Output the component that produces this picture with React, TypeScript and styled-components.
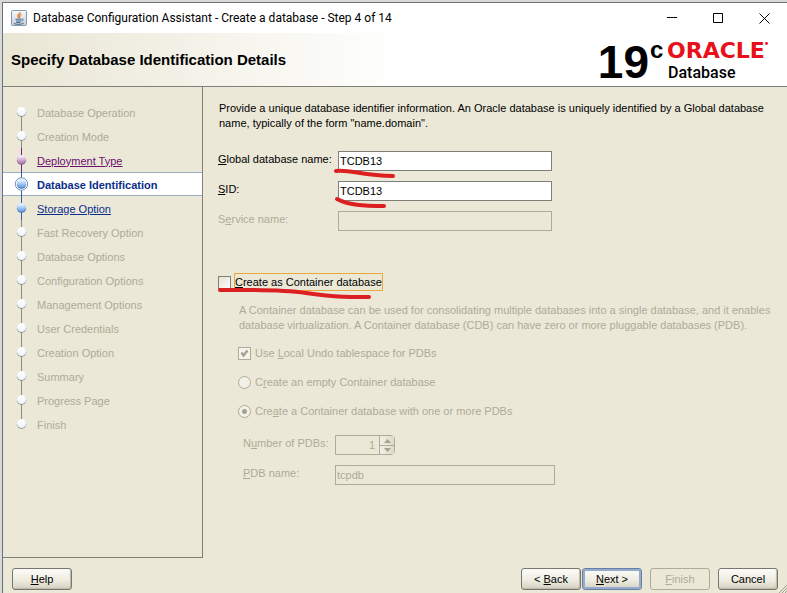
import React from "react";
import styled, { createGlobalStyle, css } from "styled-components";

const c = {
  panel: "#ebe8d7",
  line: "#80807a",
  muted: "#aeab98",
  mutedLine: "#aeab98",
  navy: "#0a2f8a",
  purple: "#6b0f6e",
  mark: "#dc1f20",
};

const Global = createGlobalStyle`
  *, *::before, *::after { box-sizing: border-box; }
  html, body, #root { height: 100%; }
  body {
    margin: 0;
    overflow: hidden;
    background: #d8d9db;
    color: #000;
    font: 11px/15px "Liberation Sans", Arial, sans-serif;
  }
  u { text-underline-offset: 1px; }
`;

const Desktop = styled.div`
  display: flex;
  height: 100%;
  padding: 2px 0 0 2px;
`;

const Window = styled.main`
  display: flex;
  flex: 1;
  flex-direction: column;
  border: solid #6f7072;
  border-width: 1px 0 0 1px;
  background: ${c.panel};
`;

const TitleBar = styled.header`
  display: flex;
  flex: none;
  align-items: center;
  height: 30px;
  padding-left: 8px;
  background: #fff;
`;

const TitleText = styled.span`
  flex: 1;
  margin-left: 6px;
  font: 12px/16px Roboto, "Open Sans", sans-serif;
  white-space: nowrap;
`;

const WindowButton = styled.button`
  display: grid;
  place-items: center;
  width: 46px;
  height: 28px;
  padding: 0;
  border: 0;
  background: none;
`;

const Banner = styled.section`
  display: flex;
  flex: none;
  align-items: center;
  justify-content: space-between;
  height: 54px;
  padding: 0 8px 0 8px;
  border-bottom: 1px solid ${c.line};
  background: linear-gradient(90deg, #e9e6d4 0, #fff 400px);
`;

const Heading = styled.h1`
  margin: 0;
  font-size: 15px;
  line-height: 20px;
`;

const Logo = styled.div`
  display: flex;
  align-items: flex-start;
  height: 44px;
`;

const Version = styled.span`
  font: bold 46px/48px "Liberation Sans", Arial, sans-serif;
`;

const Release = styled.span`
  width: 16px;
  padding-left: 1px;
  font: bold 24px/24px "Liberation Sans", sans-serif;
`;

const LogoNames = styled.div`
  display: flex;
  flex-direction: column;
  width: 112px;
  margin-left: 2px;
`;

const Brand = styled.span`
  display: flex;
  align-items: flex-start;
  color: #e8101a;
  font: bold 22px/25px "DejaVu Sans", sans-serif;
`;

const Registered = styled.svg`
  flex: none;
  margin-top: 4px;
`;

const Product = styled.span`
  padding-left: 1px;
  font: 500 16px/20px Roboto, "Liberation Sans", sans-serif;
`;

const Body = styled.div`
  display: flex;
  flex: 1;
  min-height: 0;
`;

const Steps = styled.nav`
  flex: none;
  width: 200px;
  padding-top: 13px;
  border: solid ${c.line};
  border-width: 0 1px 1px 0;
`;

const StepList = styled.ol`
  margin: 0;
  padding: 0;
  list-style: none;
`;

type StepState = "idle" | "visited" | "current" | "next";

const stepText = {
  idle: css`color: ${c.muted};`,
  visited: css`color: ${c.purple};`,
  current: css`color: ${c.navy}; font-weight: bold;`,
  next: css`color: ${c.navy};`,
};

const Step = styled.li<{ $state: StepState }>`
  display: flex;
  align-items: center;
  height: 24px;
  ${(p) => stepText[p.$state]}
  ${(p) =>
    p.$state === "current" &&
    css`
      background: linear-gradient(#9aabc6 1px, #fff 1px, #fff 23px, #9aabc6 23px);
    `}
`;

const StepIcon = styled.svg`
  flex: none;
  width: 34px;
  height: 24px;
`;

const StepLabel = styled.span`
  padding-top: 2px;
`;

const StepLink = styled.a`
  padding-top: 2px;
  color: inherit;
  text-underline-offset: 1px;
`;

const Content = styled.form`
  flex: 1;
  min-width: 0;
  padding: 14px 10px 0 15px;
`;

const Intro = styled.p`
  margin: 0 0 20px;
  padding-left: 1px;
`;

const Row = styled.div<{ $label: number; $muted?: boolean }>`
  position: relative;
  display: grid;
  grid-template-columns: ${(p) => p.$label}px minmax(0, 1fr);
  height: 20px;
  margin-bottom: 10px;
  color: ${(p) => (p.$muted ? c.muted : "#000")};
`;

const FieldLabel = styled.label`
  line-height: 17px;
`;

const TextField = styled.input<{ $width: number }>`
  width: 100%;
  max-width: ${(p) => p.$width}px;
  height: 20px;
  padding: 0 1px;
  border: 1px solid ${c.line};
  border-radius: 0;
  background: #fff;
  color: #000;
  font: inherit;
  &:disabled {
    border-color: ${c.mutedLine};
    background: transparent;
    color: ${c.muted};
  }
`;

const Mark = styled.svg`
  position: absolute;
  z-index: 1;
  overflow: visible;
  fill: none;
  stroke: ${c.mark};
  stroke-width: 4;
  stroke-linecap: round;
  stroke-linejoin: round;
  pointer-events: none;
`;

const FieldMark = styled(Mark)`
  top: 16px;
  left: 115px;
  width: 64px;
  height: 14px;
`;

const OptionMark = styled(Mark)`
  top: 14px;
  left: 0;
  width: 156px;
  height: 12px;
`;

const Container = styled.div`
  position: relative;
  display: flex;
  align-items: center;
  height: 18px;
  margin-top: 42px;
`;

const FocusLabel = styled.label`
  height: 18px;
  margin-left: 3px;
  border: 1px solid #e8a93a;
  line-height: 17px;
`;

const tick =
  "url(\"data:image/svg+xml,%3Csvg xmlns='http://www.w3.org/2000/svg' width='11' height='11'%3E%3Cpath d='M2.5 4.5 4.500 7.500 8.500 2.500' fill='none' stroke='%23a3a193' stroke-width='2.400'/%3E%3C/svg%3E\")";

const Tick = styled.input`
  appearance: none;
  flex: none;
  width: 13px;
  height: 13px;
  margin: 0;
  border: 1px solid ${c.line};
  background: linear-gradient(135deg, #e6e3d4, #fbfaf6);
  &:disabled { border-color: ${c.mutedLine}; }
  &:checked { background: ${tick} center no-repeat, #f5f3ea; }
`;

const Radio = styled.input`
  appearance: none;
  flex: none;
  width: 13px;
  height: 13px;
  margin: 0;
  border: 1px solid ${c.mutedLine};
  border-radius: 50%;
  background: #f3f1e7;
  &:checked { background: radial-gradient(circle, #a3a193 2px, #f3f1e7 3px); }
`;

const Nested = styled.div`
  padding: 12px 0 0 20px;
  color: ${c.muted};
`;

const Description = styled.p`
  margin: 0 0 12px;
  padding-left: 1px;
`;

const Option = styled.div`
  display: flex;
  align-items: center;
  gap: 4px;
  height: 17px;
  margin-bottom: 12px;
`;

const PdbFields = styled.div`
  padding: 3px 0 0 5px;
`;

const Spinner = styled.div`
  display: flex;
  width: 60px;
  height: 20px;
  border: 1px solid ${c.mutedLine};
  border-radius: 0 4px 4px 0;
`;

const SpinnerInput = styled.input`
  width: 44px;
  padding: 1px 4px 0 0;
  border: 0;
  border-right: 1px solid ${c.mutedLine};
  background: transparent;
  color: ${c.muted};
  font: inherit;
  text-align: right;
`;

const SpinnerButtons = styled.div`
  display: grid;
  flex: 1;
  grid-template-rows: 1fr 1fr;
`;

const SpinnerButton = styled.button`
  display: grid;
  place-items: center;
  padding: 0;
  border: 0;
  background: linear-gradient(90deg, #f2f0e6, #dedaca);
  & + & { border-top: 1px solid ${c.mutedLine}; }
`;

const Footer = styled.footer`
  position: relative;
  display: flex;
  flex: none;
  height: 35px;
  padding: 10px 9px 0;
`;

const Actions = styled.div`
  display: flex;
  margin-left: auto;
`;

const Button = styled.button<{ $primary?: boolean; $gap?: number }>`
  width: 60px;
  height: 22px;
  margin-left: ${(p) => p.$gap ?? 0}px;
  padding: 1px 0 0;
  border: 1px solid #77776f;
  border-radius: 3px;
  background: linear-gradient(#fcfbf8, #efede1 55%, #d5d1c0);
  box-shadow: inset -1px -1px 1px #bdbaa9;
  color: #000;
  font: inherit;
  ${(p) =>
    p.$primary &&
    css`
      border-color: #6a7f9f;
      box-shadow: inset 0 0 0 2px #93abcf;
    `}
  &:disabled {
    border-color: ${c.mutedLine};
    background: transparent;
    box-shadow: none;
    color: ${c.muted};
  }
`;

const Grip = styled.svg`
  position: absolute;
  right: 0;
  bottom: 0;
`;

const steps: [string, StepState][] = [
  ["Database Operation", "idle"],
  ["Creation Mode", "idle"],
  ["Deployment Type", "visited"],
  ["Database Identification", "current"],
  ["Storage Option", "next"],
  ["Fast Recovery Option", "idle"],
  ["Database Options", "idle"],
  ["Configuration Options", "idle"],
  ["Management Options", "idle"],
  ["User Credentials", "idle"],
  ["Creation Option", "idle"],
  ["Summary", "idle"],
  ["Progress Page", "idle"],
  ["Finish", "idle"],
];

const lineColor = { idle: "#8b8b86", visited: "#7a1a80", current: "#3d5fa8", next: "#3d5fa8" };
const edgeColor = { idle: "#858a96", visited: "#82608c", current: "#3f66a5", next: "#3f66a5" };

function StepNode({ state, first, last }: { state: StepState; first: boolean; last: boolean }) {
  return (
    <StepIcon viewBox="0 0 34 24" aria-hidden="true">
      <path d={`M18.500 ${first ? 12 : 0}V${last ? 12 : 24}`} stroke={lineColor[state]} />
      {state === "current" && <circle cx="18.500" cy="12" r="6.200" fill="#fff" stroke="#6f93c4" />}
      <circle cx="18.500" cy="12.200" r="4.600" fill={edgeColor[state]} />
      <circle cx="18.500" cy="11.500" r="4.500" fill={`url(#node-${state})`} />
    </StepIcon>
  );
}

function NodeGradients() {
  const stops: [StepState, string, string][] = [
    ["idle", "#ffffff", "#eef1f8"],
    ["visited", "#f6e8f5", "#a56cab"],
    ["current", "#e3f1ff", "#5b97e6"],
    ["next", "#e3f1ff", "#5b97e6"],
  ];
  return (
    <svg width="0" height="0" display="block" aria-hidden="true">
      <defs>
        {stops.map(([id, a, b]) => (
          <linearGradient key={id} id={`node-${id}`} x1="0" y1="0" x2="0" y2="1">
            <stop offset="0.15" stopColor={a} />
            <stop offset="1" stopColor={b} />
          </linearGradient>
        ))}
      </defs>
    </svg>
  );
}

function JavaIcon() {
  return (
    <svg width="16" height="16" viewBox="0 0 16 16" fill="none" aria-hidden="true">
      <defs>
        <linearGradient id="java-tile" x1="0" y1="0" x2="0" y2="1">
          <stop offset="0" stopColor="#f8fafc" />
          <stop offset="1" stopColor="#c3ced9" />
        </linearGradient>
      </defs>
      <rect x="0.500" y="0.500" width="15" height="15" rx="1" fill="url(#java-tile)" stroke="#8799aa" />
      <path d="M9 2c.8 1.500-3 2.600-2.200 4.300.3.700.9 1.100.7 1.700M10.500 4.300C8.500 5.200 8 6 8.700 6.900c.4.600.1 1-.4 1.500" stroke="#e07a2c" strokeWidth="1.200" />
      <path d="M4.500 9.200h6M5 11h5M5.300 12.500h4.200M10.700 9.300c2-.6 2 1.200-.1 1.700M3 13.500c2.500 1.200 7.500 1.100 9.700-.3" stroke="#44688d" />
    </svg>
  );
}

export default function App() {
  return (
    <>
      <Global />
      <Desktop>
        <Window>
          <TitleBar>
            <JavaIcon />
            <TitleText>Database Configuration Assistant - Create a database - Step 4 of 14</TitleText>
            <WindowButton type="button" aria-label="Minimize">
              <svg width="11" height="11" stroke="#000"><path d="M0 4.500h10" /></svg>
            </WindowButton>
            <WindowButton type="button" aria-label="Maximize">
              <svg width="11" height="11" fill="none" stroke="#000"><path d="M.5.5h9v9h-9z" /></svg>
            </WindowButton>
            <WindowButton type="button" aria-label="Close">
              <svg width="11" height="11" stroke="#000"><path d="M.5.5l10 10M10.500.5l-10 10" /></svg>
            </WindowButton>
          </TitleBar>
          <Banner>
            <Heading>Specify Database Identification Details</Heading>
            <Logo>
              <Version>19</Version>
              <Release>c</Release>
              <LogoNames>
                <Brand>
                  ORACLE
                  <Registered width="3" height="3" aria-hidden="true">
                    <circle cx="1.500" cy="1.500" r="1.400" fill="#e8101a" />
                  </Registered>
                </Brand>
                <Product>Database</Product>
              </LogoNames>
            </Logo>
          </Banner>
          <Body>
            <Steps aria-label="Steps">
              <NodeGradients />
              <StepList>
                {steps.map(([label, state], i) => (
                  <Step key={label} $state={state}>
                    <StepNode state={state} first={i === 0} last={i === steps.length - 1} />
                    {state === "visited" || state === "next" ? (
                      <StepLink href="#">{label}</StepLink>
                    ) : (
                      <StepLabel>{label}</StepLabel>
                    )}
                  </Step>
                ))}
              </StepList>
            </Steps>
            <Content>
              <Intro>
                Provide a unique database identifier information. An Oracle database is uniquely identified by a Global database name, typically of the form "name.domain".
              </Intro>
              <Row $label={120}>
                <FieldLabel htmlFor="gdn"><u>G</u>lobal database name:</FieldLabel>
                <TextField id="gdn" $width={214} defaultValue="TCDB13" />
                <FieldMark viewBox="0 0 64 14"><path d="M3 4C16 2 30 9 60 9" /></FieldMark>
              </Row>
              <Row $label={120}>
                <FieldLabel htmlFor="sid"><u>S</u>ID:</FieldLabel>
                <TextField id="sid" $width={214} defaultValue="TCDB13" />
                <FieldMark viewBox="0 0 64 14"><path d="M4 2C15 8 30 9 51 9" /></FieldMark>
              </Row>
              <Row $label={120} $muted>
                <FieldLabel htmlFor="service">S<u>e</u>rvice name:</FieldLabel>
                <TextField id="service" $width={214} disabled />
              </Row>
              <Container>
                <Tick id="cdb" type="checkbox" />
                <FocusLabel htmlFor="cdb"><u>C</u>reate as Container database</FocusLabel>
                <OptionMark viewBox="0 0 156 12"><path d="M2 3C32 3 60 2 88 6S125 10 151 10" /></OptionMark>
              </Container>
              <Nested>
                <Description>
                  A Container database can be used for consolidating multiple databases into a single database, and it enables database virtualization. A Container database (CDB) can have zero or more pluggable databases (PDB).
                </Description>
                <Option>
                  <Tick id="undo" type="checkbox" defaultChecked disabled />
                  <label htmlFor="undo">Use <u>L</u>ocal Undo tablespace for PDBs</label>
                </Option>
                <Option>
                  <Radio id="empty" type="radio" name="kind" disabled />
                  <label htmlFor="empty">C<u>r</u>eate an empty Container database</label>
                </Option>
                <Option>
                  <Radio id="filled" type="radio" name="kind" defaultChecked disabled />
                  <label htmlFor="filled">Cre<u>a</u>te a Container database with one or more PDBs</label>
                </Option>
                <PdbFields>
                  <Row $label={92} $muted>
                    <FieldLabel htmlFor="count">N<u>u</u>mber of PDBs:</FieldLabel>
                    <Spinner>
                      <SpinnerInput id="count" defaultValue="1" disabled />
                      <SpinnerButtons>
                        <SpinnerButton type="button" aria-label="Increase" disabled>
                          <svg width="7" height="4" fill="#a3a193"><path d="M3.500 0 7 4H0z" /></svg>
                        </SpinnerButton>
                        <SpinnerButton type="button" aria-label="Decrease" disabled>
                          <svg width="7" height="4" fill="#a3a193"><path d="M0 0h7L3.500 4z" /></svg>
                        </SpinnerButton>
                      </SpinnerButtons>
                    </Spinner>
                  </Row>
                  <Row $label={92} $muted>
                    <FieldLabel htmlFor="pdb"><u>P</u>DB name:</FieldLabel>
                    <TextField id="pdb" $width={220} defaultValue="tcpdb" disabled />
                  </Row>
                </PdbFields>
              </Nested>
            </Content>
          </Body>
          <Footer>
            <Button type="button"><u>H</u>elp</Button>
            <Actions>
              <Button type="button">&lt; <u>B</u>ack</Button>
              <Button type="button" $primary $gap={1}><u>N</u>ext &gt;</Button>
              <Button type="button" $gap={8} disabled><u>F</u>inish</Button>
              <Button type="button" $gap={8}>Cancel</Button>
            </Actions>
            <Grip width="8" height="8" stroke="#a09e90" aria-hidden="true"><path d="M0 8 8 0M3 8l5-5M6 8l2-2" /></Grip>
          </Footer>
        </Window>
      </Desktop>
    </>
  );
}
